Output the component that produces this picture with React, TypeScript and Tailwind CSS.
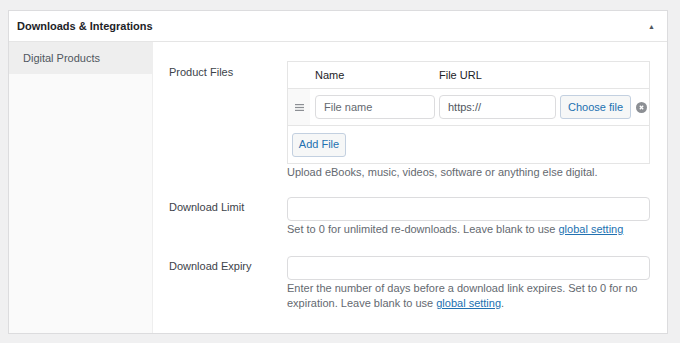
function Field({ label, children, top = 'pt-[3px]' }: { label: string; children: React.ReactNode; top?: string }) {
  return (
    <div className="flex">
      <div className={`w-[118px] shrink-0 ${top} text-[#3c434a]`}>{label}</div>
      <div className="flex-1">{children}</div>
    </div>
  );
}

export default function App() {
  return (
    <div
      className="min-h-[343px] w-[680px] bg-[#f0f0f1] pt-[10px] pl-[8px] text-[11px] leading-[15px]"
      style={{ fontFamily: '"Liberation Sans", Arial, sans-serif' }}
    >
      <div className="w-[660px] border border-[#dcdcde] bg-white">
        {/* header */}
        <div className="flex h-[31px] items-center justify-between border-b border-[#e5e5e5] pl-[8px] pr-[12px]">
          <span className="text-[11px] font-bold text-[#1d2327]">Downloads &amp; Integrations</span>
          <span className="text-[7px] text-[#50575e]">▲</span>
        </div>

        <div className="flex h-[291px]">
          {/* sidebar */}
          <div className="w-[144px] shrink-0 border-r border-[#eee] bg-[#fafafa]">
            <div className="flex h-[32px] items-center bg-[#eeeeee] pl-[14px] text-[#50575e]">Digital Products</div>
          </div>

          {/* content */}
          <div className="flex flex-1 flex-col pl-[16px] pr-[16px] pt-[19px]">
            <Field label="Product Files" top="pt-[4px]">
              <div className="w-[363px] border border-[#e5e5e5]">
                <div className="flex h-[27px] items-center border-b border-[#e5e5e5] text-[#1d2327]">
                  <span className="ml-[27px] w-[124px]">Name</span>
                  <span>File URL</span>
                </div>
                <div className="flex h-[37px] items-center border-b border-[#e5e5e5]">
                  <div className="flex h-full w-[22px] items-center justify-center bg-[#f9f9f9]">
                    <svg width="9" height="7" viewBox="0 0 9 7">
                      <rect x="0" y="0" width="9" height="1.2" fill="#8c8f94" />
                      <rect x="0" y="2.9" width="9" height="1.2" fill="#8c8f94" />
                      <rect x="0" y="5.8" width="9" height="1.2" fill="#8c8f94" />
                    </svg>
                  </div>
                  <div className="ml-[5px] flex h-[24px] w-[120px] items-center rounded-[4px] border border-[#dcdcde] px-[8px] text-[#646970]">File name</div>
                  <div className="ml-[4px] flex h-[24px] w-[117px] items-center rounded-[4px] border border-[#dcdcde] px-[8px] text-[#50575e]">https://</div>
                  <div className="ml-[4px] flex h-[24px] w-[71px] items-center justify-center rounded-[3px] border border-[#c3d0e0] bg-[#f6f7f7] text-[#2271b1]">Choose file</div>
                  <div className="ml-[5px] flex h-[11px] w-[11px] items-center justify-center rounded-full bg-[#8c8f94]">
                    <svg width="5" height="5" viewBox="0 0 5 5">
                      <path d="M0.8 0.8 L4.2 4.2 M4.2 0.8 L0.8 4.2" stroke="white" strokeWidth="1.3" />
                    </svg>
                  </div>
                </div>
                <div className="flex h-[37px] items-center pl-[4px]">
                  <div className="flex h-[24px] w-[54px] items-center justify-center rounded-[3px] border border-[#c3d0e0] bg-[#f6f7f7] text-[#2271b1]">Add File</div>
                </div>
              </div>
              <p className="mt-[1px] text-[#646970]">Upload eBooks, music, videos, software or anything else digital.</p>
            </Field>

            <div className="mt-[17px]">
              <Field label="Download Limit">
                <div className="h-[24px] w-[363px] rounded-[4px] border border-[#dcdcde]" />
                <p className="mt-[1px] text-[#646970]">
                  Set to 0 for unlimited re-downloads. Leave blank to use{' '}
                  <span className="text-[#2271b1] underline">global setting</span>
                </p>
              </Field>
            </div>

            <div className="mt-[19px]">
              <Field label="Download Expiry">
                <div className="h-[24px] w-[363px] rounded-[4px] border border-[#dcdcde]" />
                <div className="mt-[1px] text-[#646970]">
                  <p>Enter the number of days before a download link expires. Set to 0 for no</p>
                  <p>
                    expiration. Leave blank to use <span className="text-[#2271b1] underline">global setting</span>.
                  </p>
                </div>
              </Field>
            </div>
          </div>
        </div>
      </div>
    </div>
  );
}
